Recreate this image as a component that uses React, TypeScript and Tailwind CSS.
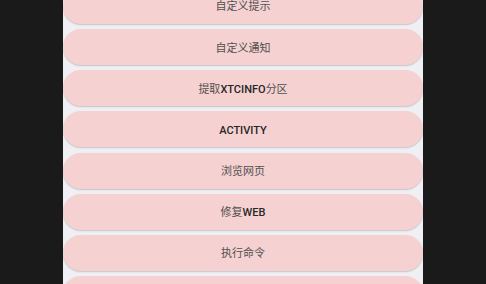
import React from 'react';

const ITEMS = ['自定义提示', '自定义通知', '提取XTCINFO分区', 'ACTIVITY', '浏览网页', '修复WEB', '执行命令', ''];

// Latin runs are drawn medium and darker, CJK runs stay regular
const renderLabel = (label: string) =>
  label.split(/([A-Za-z0-9]+)/).filter(Boolean).map((part, i) =>
    /[A-Za-z0-9]/.test(part) ? (
      <span key={i} className="font-medium text-[#262626]">{part}</span>
    ) : (
      <span key={i} className="font-normal text-[#505050]">{part}</span>
    )
  );

const App: React.FC = () => {
  return (
    <div className="w-[486px] h-[284px] overflow-hidden bg-[#1a1a1a] flex justify-center">
      <div className="w-[360px] h-full bg-[#f0eff4] overflow-hidden">
        <div className="-mt-[12.2px] flex flex-col gap-[5.2px]">
          {ITEMS.map((label, i) => (
            <button
              key={i}
              className="h-[36px] w-full shrink-0 rounded-full bg-[#f6d1d1] shadow-[0_1px_1.5px_rgba(0,0,0,0.18)] flex items-center justify-center pt-[2px] text-[11px] leading-none"
              style={{ fontFamily: 'Roboto, "Noto Sans CJK SC", sans-serif' }}
            >
              {renderLabel(label)}
            </button>
          ))}
        </div>
      </div>
    </div>
  );
};

export default App;
